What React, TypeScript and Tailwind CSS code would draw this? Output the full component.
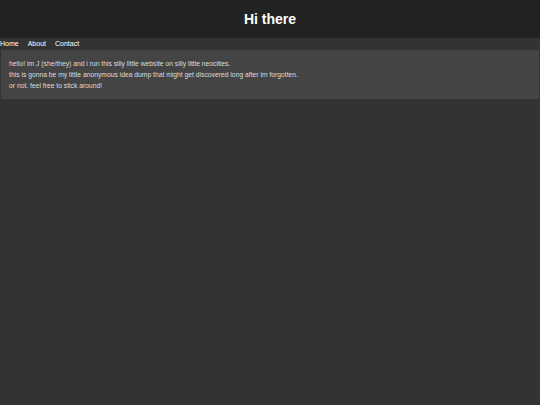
export default function App() {
  return (
    <div className="min-h-[405px] bg-[#333333] font-['Liberation_Sans',Arial,sans-serif] text-[#dddddd]">
      <header className="flex h-[38px] items-center justify-center bg-[#222222]">
        <h1 className="text-[14px] font-bold text-white">Hi there</h1>
      </header>

      <nav className="flex h-[12px] items-center gap-[9px] bg-[#333333] text-[7px] text-white">
        <a href="#">Home</a>
        <a href="#">About</a>
        <a href="#">Contact</a>
      </nav>

      <main className="mx-px bg-[#444444] px-[8px] pt-[8px] pb-[8px] text-[6.75px] leading-[11px] text-[#dddddd]">
        <p>hello! im J (she/they) and i run this silly little website on silly little neocities.</p>
        <p>this is gonna be my little anonymous idea dump that might get discovered long after im forgotten.</p>
        <p>or not. feel free to stick around!</p>
      </main>
    </div>
  );
}
